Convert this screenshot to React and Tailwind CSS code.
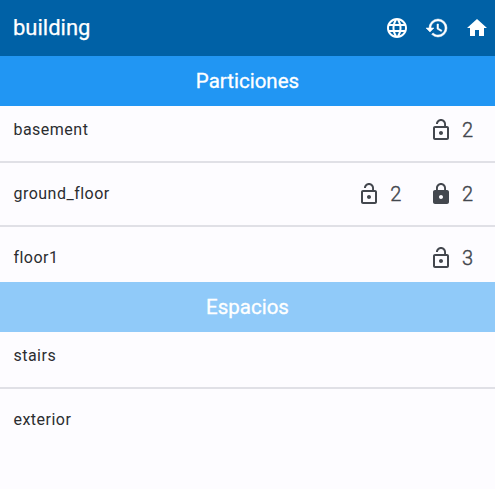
import { MdLanguage, MdHome, MdLock, MdLockOpen } from "react-icons/md";

function HistoryIcon() {
  return (
    <svg width="24" height="24" viewBox="0 0 24 24" fill="currentColor" stroke="currentColor" strokeWidth="0.5">
      <path d="M13 3a9 9 0 0 0-9 9H1l3.89 3.89.07.14L9 12H6c0-3.87 3.13-7 7-7s7 3.13 7 7-3.13 7-7 7c-1.93 0-3.68-.79-4.94-2.06l-1.42 1.42A8.954 8.954 0 0 0 13 21a9 9 0 0 0 0-18zm-1 5v5l4.28 2.54.72-1.21-3.5-2.08V8H12z" />
    </svg>
  );
}

function Count({ locked, n }) {
  const Icon = locked ? MdLock : MdLockOpen;
  return (
    <div className="flex items-center text-[#43474e]">
      <Icon size={24} />
      <span className="ml-[8.7px] w-3 text-xl font-light leading-6 [-webkit-text-stroke:0.4px_#43474e]">{n}</span>
    </div>
  );
}

function Row({ name, children }) {
  return (
    <div className="flex h-16 items-center justify-between border-b-2 border-[#e0e0e6] pl-[13.4px] pr-[20.9px] last:h-[62px] last:border-b-0">
      <span className="text-base tracking-[0.5px] text-[#2b2d30]">{name}</span>
      <div className="flex gap-[27.3px]">{children}</div>
    </div>
  );
}

export default function App() {
  return (
    <div className="h-[489px] w-[495px] overflow-hidden bg-[#fdfcff] font-['Roboto',sans-serif]">
      <header className="flex h-14 items-center justify-between bg-[#0061a6] pl-[13px] pr-[6px] text-white">
        <h1 className="text-[22px] leading-7 [-webkit-text-stroke:0.25px_white]">building</h1>
        <div className="flex gap-4">
          <MdLanguage size={24} />
          <HistoryIcon />
          <MdHome size={24} />
        </div>
      </header>
      <h2 className="flex h-[50px] items-center justify-center bg-[#2196f3] text-[20.5px] text-white [-webkit-text-stroke:0.3px_white]">Particiones</h2>
      <div className="h-44 overflow-hidden">
        <div className="-mt-[7px]">
          <Row name="basement"><Count n={2} /></Row>
          <Row name="ground_floor"><Count n={2} /><Count locked n={2} /></Row>
          <Row name="floor1"><Count n={3} /></Row>
        </div>
      </div>
      <h2 className="flex h-[50px] items-center justify-center bg-[#90caf9] text-[20.5px] text-white [-webkit-text-stroke:0.3px_white]">Espacios</h2>
      <div className="-mt-[7px]">
        <Row name="stairs" />
        <Row name="exterior" />
      </div>
    </div>
  );
}
